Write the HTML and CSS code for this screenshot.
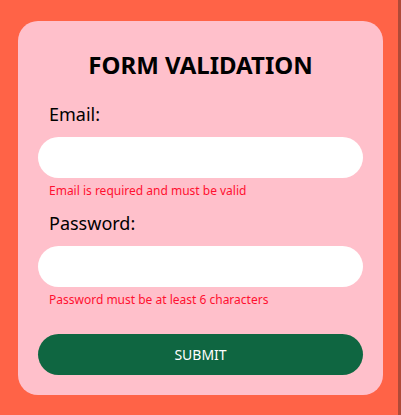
FILE: index.html
```html
<!DOCTYPE html>
<html lang="en">
<head>
<meta charset="utf-8">
<title>Form Validation</title>
<link rel="stylesheet" href="styles.css">
</head>
<body>
  <form class="card" novalidate>
    <h1 class="title">FORM VALIDATION</h1>
    <label class="label" for="email">Email:</label>
    <input class="field" id="email" type="email">
    <p class="error">Email is required and must be valid</p>
    <label class="label label-second" for="password">Password:</label>
    <input class="field" id="password" type="password">
    <p class="error">Password must be at least 6 characters</p>
    <button class="submit" type="button">SUBMIT</button>
  </form>
</body>
</html>
```

FILE: styles.css
```css
html {
  background: #ff6347;
  border-right: 3px solid #b04a38;
  height: 100%;
  box-sizing: border-box;
}
body {
  margin: 0;
  padding: 21px 0 0 18px;
  font-family: "Noto Sans", sans-serif;
  color: #000;
}
.card {
  width: 365px;
  box-sizing: border-box;
  padding: 29px 20px 20px;
  background: #ffc0cb;
  border-radius: 20px;
  display: flex;
  flex-direction: column;
}
.title {
  margin: 0 0 22px;
  font-size: 24px;
  line-height: 30px;
  font-weight: 700;
  text-align: center;
}
.label {
  padding-left: 11px;
  font-size: 18px;
  line-height: 24px;
}
.label-second {
  margin-top: 12px;
}
.field {
  margin-top: 11px;
  height: 41px;
  border: none;
  border-radius: 21px;
  background: #fff;
  padding: 0 16px;
  box-sizing: border-box;
  width: 100%;
  font: inherit;
  outline: none;
}
.error {
  margin: 5px 0 0;
  padding-left: 11px;
  font-size: 12px;
  line-height: 16px;
  color: #ff1030;
}
.submit {
  margin-top: 26px;
  height: 41px;
  border: none;
  border-radius: 21px;
  background: #0f6641;
  color: #fff;
  font-family: "Noto Sans", sans-serif;
  font-size: 14px;
  cursor: pointer;
}
```
